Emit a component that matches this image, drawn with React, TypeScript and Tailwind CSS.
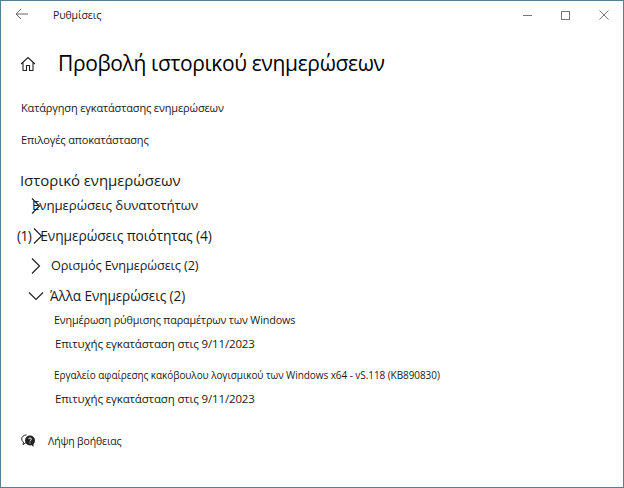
import React from 'react';

const Chevron = ({ open = false }: { open?: boolean }) => (
  <svg width="16" height="16" viewBox="0 0 16 16" fill="none" stroke="#222" strokeWidth="1.2" className="shrink-0">
    {open ? <path d="M1 4.5 L8 11.5 L15 4.5" /> : <path d="M4 0.5 L11.5 8 L4 15.5" />}
  </svg>
);

const App: React.FC = () => {
  return (
    <div className="w-[624px] h-[488px] bg-white border border-[#5b7d92] overflow-hidden flex flex-col text-[#1a1a1a] font-['Open_Sans','Noto_Sans',sans-serif]">
      {/* Title bar */}
      <div className="flex items-center h-[28px] shrink-0">
        <svg width="14" height="12" viewBox="0 0 14 12" fill="none" stroke="#666" strokeWidth="1" className="ml-[14px] mt-[-2px]">
          <path d="M13 6 H1 M6 1 L1 6 L6 11" />
        </svg>
        <span className="ml-[24px] text-[10.5px] tracking-[-0.1px] mt-[1px]">Ρυθμίσεις</span>
        <div className="ml-auto flex items-center mr-[14px] gap-[29px]">
          <div className="w-[9px] h-px bg-[#777]" />
          <div className="w-[9px] h-[9px] border border-[#777]" />
          <svg width="10" height="10" viewBox="0 0 10 10" stroke="#666" strokeWidth="0.9">
            <path d="M0.5 0.5 L9.5 9.5 M9.5 0.5 L0.5 9.5" />
          </svg>
        </div>
      </div>

      {/* Header */}
      <div className="flex items-center ml-[19px] mt-[18px] h-[34px]">
        <svg width="16" height="16" viewBox="0 0 16 16" fill="none" stroke="#222" strokeWidth="1.1">
          <path d="M1 8 L8 1.5 L15 8 M3 6.5 V14.5 H6.5 V9.5 H9.5 V14.5 H13 V6.5" />
        </svg>
        <h1 className="ml-[22px] text-[21px] text-black tracking-[-0.35px]">Προβολή ιστορικού ενημερώσεων</h1>
      </div>

      <p className="ml-[20px] mt-[19px] text-[11px] leading-[16px] tracking-[-0.15px]">Κατάργηση εγκατάστασης ενημερώσεων</p>
      <p className="ml-[20px] mt-[16px] text-[11px] leading-[16px] tracking-[-0.15px]">Επιλογές αποκατάστασης</p>

      <h2 className="ml-[19px] mt-[22px] text-[15px] leading-[20px] tracking-[-0.07px]">Ιστορικό ενημερώσεων</h2>

      {/* Update groups, the first chevrons sit on top of their labels */}
      <div className="flex items-center ml-[27px] mt-[6px] h-[20px]">
        <Chevron />
        <span className="ml-[-12px] text-[13.3px] tracking-[-0.1px]">Ενημερώσεις δυνατοτήτων</span>
      </div>
      <div className="flex items-center ml-[16px] mt-[10px] h-[20px] text-[13.8px] tracking-[-0.1px]">
        <span className="tracking-[-0.6px]">(1)</span>
        <span className="ml-[-1px]"><Chevron /></span>
        <span className="ml-[-6px]">Ενημερώσεις ποιότητας (4)</span>
      </div>
      <div className="flex items-center ml-[27px] mt-[10px] h-[20px]">
        <Chevron />
        <span className="ml-[7px] text-[12.7px] tracking-[-0.1px]">Ορισμός Ενημερώσεις (2)</span>
      </div>
      <div className="flex items-center ml-[27px] mt-[10px] h-[20px]">
        <Chevron open />
        <span className="ml-[6px] text-[13.6px] tracking-[-0.1px]">Άλλα Ενημερώσεις (2)</span>
      </div>

      <p className="ml-[53px] mt-[6px] text-[10.8px] leading-[16px] tracking-[-0.15px]">Ενημέρωση ρύθμισης παραμέτρων των Windows</p>
      <p className="ml-[54px] mt-[8px] text-[11.5px] leading-[16px] tracking-[-0.15px]">Επιτυχής εγκατάσταση στις 9/11/2023</p>
      <p className="ml-[53px] mt-[15px] text-[10px] leading-[16px] tracking-[-0.07px]">Εργαλείο αφαίρεσης κακόβουλου λογισμικού των Windows x64 - vS.118 (KB890830)</p>
      <p className="ml-[54px] mt-[8px] text-[11.5px] leading-[16px] tracking-[-0.15px]">Επιτυχής εγκατάσταση στις 9/11/2023</p>

      <div className="flex items-center ml-[20px] mt-[26px]">
        <svg width="15" height="14" viewBox="0 0 15 14">
          <path d="M5.5 1 C2.5 1 0.7 3 0.7 5 C0.7 6.4 1.5 7.5 2.6 8.2 L2 10.5 L4.8 8.8" fill="none" stroke="#222" strokeWidth="1" />
          <circle cx="9" cy="6.5" r="5" fill="#222" />
          <path d="M10 10.5 L12.5 13 L12.5 9 Z" fill="#222" />
          <path d="M7.6 5.2 C7.7 3.5 10.4 3.5 10.4 5.2 C10.4 6.3 9 6.3 9 7.4 M9 8.5 V9.4" fill="none" stroke="#fff" strokeWidth="1" />
        </svg>
        <span className="ml-[12px] text-[10.5px] leading-[16px] tracking-[-0.15px]">Λήψη βοήθειας</span>
      </div>
    </div>
  );
};

export default App;
